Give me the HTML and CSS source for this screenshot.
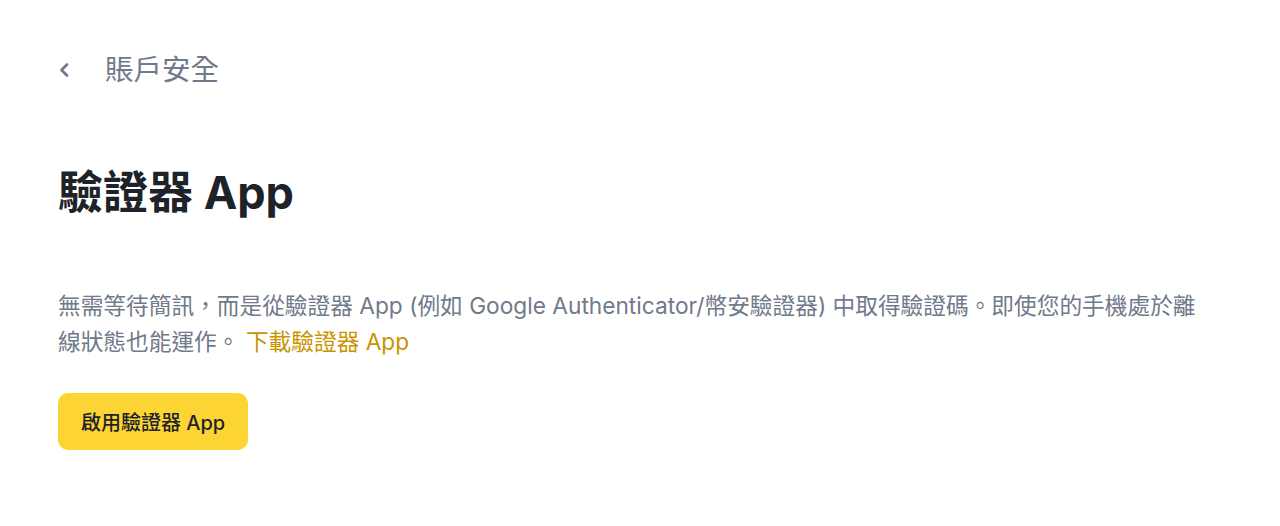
FILE: index.html
```html
<!DOCTYPE html>
<html lang="zh-Hant">
<head>
<meta charset="utf-8">
<title>驗證器 App</title>
<link rel="stylesheet" href="styles.css">
</head>
<body>
<main class="page">
  <header class="back">
    <svg class="back-icon" width="14" height="16" viewBox="0 0 14 16" aria-hidden="true">
      <path d="M9 2.5 L3.5 8 L9 13.5" fill="none" stroke="#707A8A" stroke-width="2.8" stroke-linecap="round" stroke-linejoin="round"/>
    </svg>
    <span class="back-text">賬戶安全</span>
  </header>
  <h1 class="title">驗證器 App</h1>
  <p class="desc">無需等待簡訊，而是從驗證器 App (例如 Google Authenticator/幣安驗證器) 中取得驗證碼。即使您的手機處於離線狀態也能運作。 <a class="link" href="#">下載驗證器 App</a></p>
  <button class="btn" type="button">啟用驗證器 App</button>
</main>
</body>
</html>
```

FILE: styles.css
```css
html, body {
  margin: 0;
  padding: 0;
  background: #ffffff;
}
body {
  font-family: "Inter", "Noto Sans CJK TC", sans-serif;
  color: #1E2329;
}
.page {
  padding: 50px 58px 0 58px;
}
.back {
  display: flex;
  align-items: center;
  height: 40px;
  gap: 33px;
}
.back-icon {
  display: block;
}
.back-text {
  font-size: 28.5px;
  line-height: 40px;
  color: #707A8A;
  font-weight: 400;
}
.title {
  margin: 75px 0 0 0;
  font-size: 45px;
  line-height: 56px;
  font-weight: 700;
  color: #1E2329;
}
.desc {
  margin: 67px 0 0 0;
  max-width: 1150px;
  font-size: 22.7px;
  line-height: 36px;
  color: #707A8A;
}
.link {
  color: #C99400;
  text-decoration: none;
}
.btn {
  margin-top: 33px;
  height: 57px;
  padding: 0 23px;
  border: none;
  border-radius: 10px;
  background: #FCD535;
  color: #1E2329;
  font-family: "Inter", "Noto Sans CJK TC", sans-serif;
  font-size: 20px;
  font-weight: 500;
  cursor: pointer;
}
```
